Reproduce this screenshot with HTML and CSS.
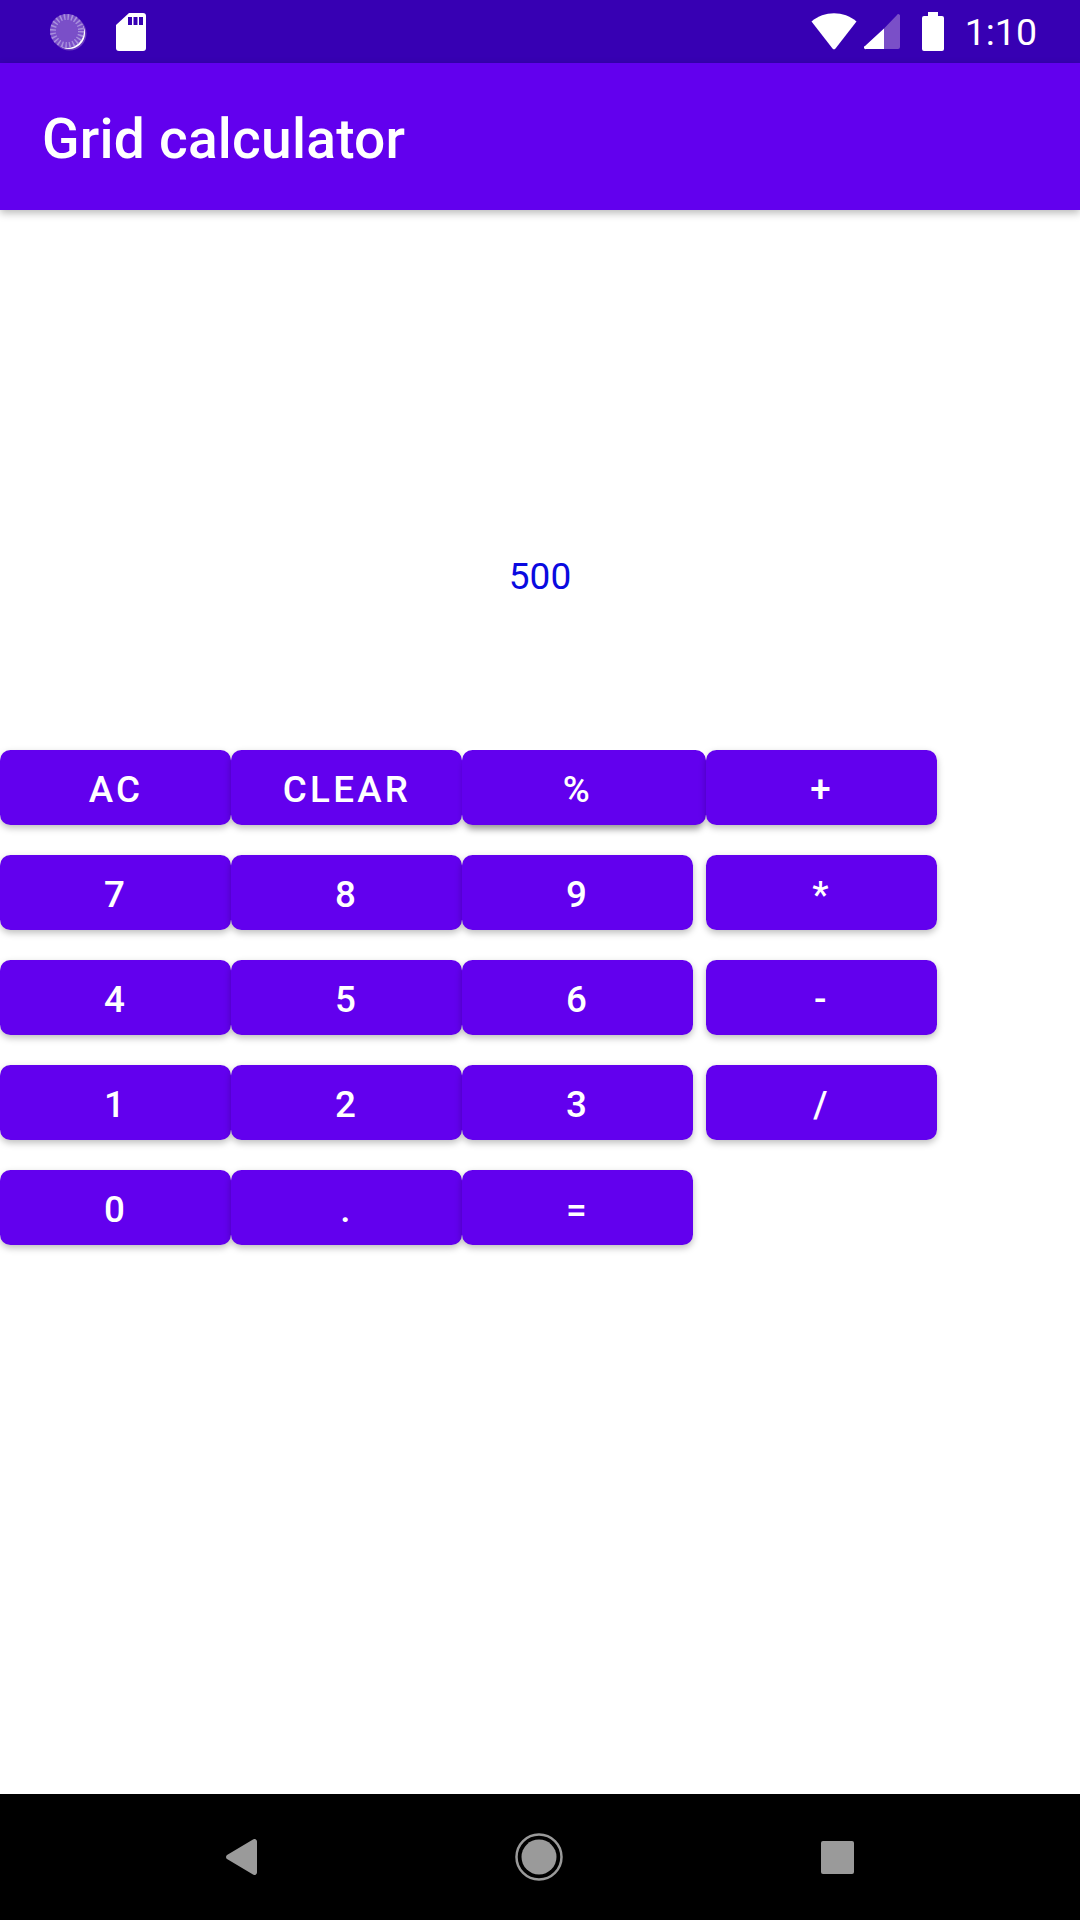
FILE: index.html
```html
<!DOCTYPE html>
<html lang="en">
<head>
<meta charset="utf-8">
<title>Grid calculator</title>
<link rel="stylesheet" href="styles.css">
</head>
<body>
<div class="app">
  <header class="status-bar">
    <div class="status-left">
      <svg class="icon-progress" width="38" height="38" viewBox="0 0 38 38" aria-hidden="true">
        <circle cx="20.500" cy="20.500" r="17" fill="#6a3bc0"/>
        <circle cx="20" cy="20" r="16" fill="#ffffff"/>
        <circle cx="18" cy="18" r="17" fill="#7a4fc8"/>
        <circle cx="18" cy="18" r="14" fill="none" stroke="#a88fdd" stroke-width="6" stroke-dasharray="1.500 2.170"/>
        <circle cx="18" cy="18" r="11" fill="#7a4fc8"/>
      </svg>
      <svg class="icon-sd" width="30" height="38" viewBox="0 0 30 38" aria-hidden="true">
        <path d="M13 0H27a3 3 0 0 1 3 3V35a3 3 0 0 1-3 3H3a3 3 0 0 1-3-3V12Z" fill="#fff"/>
        <path d="M12 4h4v8h-4zM17.500 4h4v8h-4zM23 4h4v8h-4z" fill="#3700b3"/>
      </svg>
    </div>
    <div class="status-right">
      <svg class="icon-wifi" width="46" height="37" viewBox="0 0 46 37" aria-hidden="true">
        <path d="M0.500 8.500C13 -2.500 33 -2.500 45.500 8.500L24.500 35.500a2 2 0 0 1-3 0Z" fill="#fff"/>
      </svg>
      <svg class="icon-signal" width="36" height="36" viewBox="0 0 36 36" aria-hidden="true">
        <path d="M20 14.500 33 1a1.600 1.600 0 0 1 3 1V33a2 2 0 0 1-2 2H20Z" fill="#7a4fc8"/>
        <path d="M20 14.500V35H2a1.500 1.500 0 0 1-1-3Z" fill="#fff"/>
      </svg>
      <svg class="icon-battery" width="22" height="39" viewBox="0 0 22 39" aria-hidden="true">
        <path d="M6 0H16V4H20a2 2 0 0 1 2 2V37a2 2 0 0 1-2 2H2a2 2 0 0 1-2-2V6a2 2 0 0 1 2-2H6Z" fill="#fff"/>
      </svg>
      <span class="clock">1:10</span>
    </div>
  </header>

  <div class="toolbar">
    <h1 class="title">Grid calculator</h1>
  </div>

  <main class="content">
    <div class="display">500</div>
    <div class="keypad">
      <button class="key">AC</button>
      <button class="key">CLEAR</button>
      <button class="key key-wide key-raised">%</button>
      <button class="key">+</button>
      <button class="key">7</button>
      <button class="key">8</button>
      <button class="key">9</button>
      <button class="key">*</button>
      <button class="key">4</button>
      <button class="key">5</button>
      <button class="key">6</button>
      <button class="key">-</button>
      <button class="key">1</button>
      <button class="key">2</button>
      <button class="key">3</button>
      <button class="key">/</button>
      <button class="key">0</button>
      <button class="key">.</button>
      <button class="key">=</button>
    </div>
  </main>

  <nav class="nav-bar">
    <svg width="31" height="36" viewBox="0 0 31 36" aria-hidden="true">
      <path d="M1 16 27 0.500a2.500 2.500 0 0 1 4 2V33.500a2.500 2.500 0 0 1-4 2L1 20a2.500 2.500 0 0 1 0-4Z" fill="#9a9a9a"/>
    </svg>
    <svg width="48" height="48" viewBox="0 0 48 48" aria-hidden="true">
      <circle cx="24" cy="24" r="22.500" fill="none" stroke="#9a9a9a" stroke-width="2.500"/>
      <circle cx="24" cy="24" r="17.500" fill="#9a9a9a"/>
    </svg>
    <svg width="33" height="33" viewBox="0 0 33 33" aria-hidden="true">
      <rect width="33" height="33" rx="2" fill="#9a9a9a"/>
    </svg>
  </nav>
</div>
</body>
</html>
```
FILE: styles.css
```css
* {
  box-sizing: border-box;
}

html,
body {
  margin: 0;
  padding: 0;
  background: #ffffff;
}

.app {
  display: flex;
  flex-direction: column;
  width: 1080px;
  height: 1920px;
  overflow: hidden;
  font-family: Roboto, "Liberation Sans", sans-serif;
}

.status-bar {
  flex: 0 0 63px;
  display: flex;
  justify-content: space-between;
  align-items: center;
  background: #3700b3;
  color: #ffffff;
}

.status-left {
  display: flex;
  align-items: center;
  gap: 29px;
  padding-left: 49px;
}

.icon-sd {
  display: block;
}

.status-right {
  display: flex;
  align-items: center;
  padding-right: 43px;
}

.icon-wifi {
  margin-right: 7px;
}

.icon-signal {
  margin-right: 22px;
  margin-top: 1px;
}

.icon-battery {
  margin-right: 21px;
}

.clock {
  padding-top: 2px;
  font-size: 37.500px;
  line-height: 43px;
  font-weight: 400;
}

.toolbar {
  position: relative;
  z-index: 1;
  flex: 0 0 147px;
  display: flex;
  align-items: center;
  padding-left: 42px;
  padding-top: 4px;
  background: #6200ee;
  box-shadow: 0 3px 8px rgba(0, 0, 0, 0.28);
}

.title {
  margin: 0;
  color: #ffffff;
  font-size: 55.125px;
  letter-spacing: 0.220px;
  line-height: 62px;
  font-weight: 500;
}

.content {
  flex: 1 1 auto;
  background: #ffffff;
}

.display {
  height: 540px;
  padding-top: 345px;
  text-align: center;
  color: #0a0ae0;
  font-size: 37px;
  line-height: 43px;
}

.keypad {
  display: grid;
  grid-template-columns: 231px 231px 244px 231px;
  grid-auto-rows: 75px;
  row-gap: 30px;
}

.key {
  width: 231px;
  height: 75px;
  margin: 0;
  padding: 4px 0 0 1px;
  border: 0;
  border-radius: 10.500px;
  background: #6200ee;
  color: #ffffff;
  font-family: inherit;
  font-size: 36.750px;
  font-weight: 500;
  letter-spacing: 3.280px;
  line-height: 43px;
  text-align: center;
  box-shadow: 0 3px 7px rgba(0, 0, 0, 0.26);
}

.key-wide {
  width: 244px;
  padding-right: 13px;
}

.key-raised {
  box-shadow: 0 7px 7px -3px rgba(0, 0, 0, 0.42);
}

.nav-bar {
  flex: 0 0 126px;
  display: flex;
  align-items: center;
  justify-content: space-between;
  padding: 0 226px;
  background: #000000;
}
```
